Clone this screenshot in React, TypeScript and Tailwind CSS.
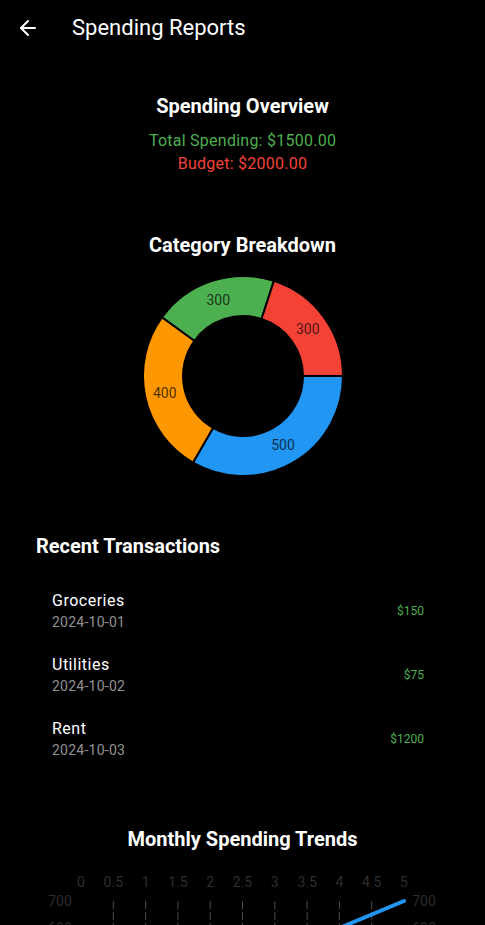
import { ArrowLeft } from "lucide-react";

const categories = [
  { value: 500, color: "#2196f3" },
  { value: 400, color: "#ff9800" },
  { value: 300, color: "#4caf50" },
  { value: 300, color: "#f44336" },
];

const transactions = [
  { title: "Groceries", date: "2024-10-01", amount: "$150" },
  { title: "Utilities", date: "2024-10-02", amount: "$75" },
  { title: "Rent", date: "2024-10-03", amount: "$1200" },
];

// Ring segment between two angles (degrees, clockwise from 3 o'clock)
function arcPath(cx: number, cy: number, r1: number, r2: number, a0: number, a1: number) {
  const rad = (a: number) => (a * Math.PI) / 180;
  const p = (r: number, a: number) => [cx + r * Math.cos(rad(a)), cy + r * Math.sin(rad(a))];
  const large = a1 - a0 > 180 ? 1 : 0;
  const [x0, y0] = p(r2, a0);
  const [x1, y1] = p(r2, a1);
  const [x2, y2] = p(r1, a1);
  const [x3, y3] = p(r1, a0);
  return `M${x0} ${y0} A${r2} ${r2} 0 ${large} 1 ${x1} ${y1} L${x2} ${y2} A${r1} ${r1} 0 ${large} 0 ${x3} ${y3} Z`;
}

function Donut() {
  const total = categories.reduce((s, c) => s + c.value, 0);
  let start = 0;
  return (
    <svg width="204" height="204" viewBox="-2 -2 204 204">
      {categories.map((c, i) => {
        const sweep = (c.value / total) * 360;
        const a0 = start;
        const a1 = start + sweep;
        start = a1;
        const mid = ((a0 + a1) / 2) * (Math.PI / 180);
        return (
          <g key={i}>
            <path d={arcPath(100, 100, 60, 100, a0, a1)} fill={c.color} stroke="#000" strokeWidth="2" />
            <text
              x={100 + 80 * Math.cos(mid)}
              y={100 + 80 * Math.sin(mid)}
              textAnchor="middle"
              dominantBaseline="central"
              fontSize="14"
              fill="#000"
              fillOpacity="0.72"
            >
              {c.value}
            </text>
          </g>
        );
      })}
    </svg>
  );
}

function TrendChart() {
  const xs = [0, 0.5, 1, 1.5, 2, 2.5, 3, 3.5, 4, 4.5, 5];
  const px = (v: number) => 81 + v * 64.6;
  const py = (v: number) => 35 + ((700 - v) / 100) * 27;
  const data = [
    [0, 300],
    [1, 450],
    [2, 400],
    [3, 500],
    [4, 600],
    [5, 700],
  ];
  const ys = [700, 600, 500, 400, 300, 200, 100, 0];
  return (
    <svg width="485" height="240" viewBox="0 0 485 240" className="block">
      {xs.map((v) => (
        <text key={v} x={px(v)} y={16} textAnchor="middle" dominantBaseline="central" fontSize="14" fill="#2e2e2e">
          {v}
        </text>
      ))}
      {ys.map((v) => (
        <g key={v}>
          <text x={60} y={py(v)} textAnchor="middle" dominantBaseline="central" fontSize="14" fill="#2e2e2e">
            {v}
          </text>
          <text x={424} y={py(v)} textAnchor="middle" dominantBaseline="central" fontSize="14" fill="#2e2e2e">
            {v}
          </text>
        </g>
      ))}
      {xs.slice(1, -1).map((v) => (
        <line key={v} x1={px(v)} x2={px(v)} y1={35} y2={py(0)} stroke="#4a4a4a" strokeWidth="1" strokeDasharray="8 3" />
      ))}
      <polyline
        points={data.map(([x, y]) => `${px(x)},${py(y)}`).join(" ")}
        fill="none"
        stroke="#2196f3"
        strokeWidth="4"
        strokeLinecap="round"
        strokeLinejoin="round"
      />
    </svg>
  );
}

export default function App() {
  return (
    <main className="min-h-screen bg-black text-white font-['Roboto',sans-serif]">
      <header className="h-[56px] flex items-center px-4">
        <ArrowLeft size={24} strokeWidth={2} className="text-white" />
        <h1 className="ml-8 text-[22px] leading-none">Spending Reports</h1>
      </header>

      <section className="mt-[38px] flex flex-col items-center">
        <h2 className="text-[20px] leading-[24px] font-bold">Spending Overview</h2>
        <p className="mt-[11px] text-[16px] leading-[23px] tracking-[0.25px] text-[#4caf50]">Total Spending: $1500.00</p>
        <p className="text-[16px] leading-[23px] tracking-[0.25px] text-[#f44336]">Budget: $2000.00</p>
      </section>

      <section className="mt-[58px] flex flex-col items-center">
        <h2 className="text-[20px] leading-[24px] font-bold">Category Breakdown</h2>
        <div className="mt-[17px]">
          <Donut />
        </div>
      </section>

      <section className="mt-[56px] pl-9 pr-[45px]">
        <h2 className="text-[20px] leading-[24px] font-bold">Recent Transactions</h2>
        <ul className="mt-[21px]">
          {transactions.map((t) => (
            <li key={t.title} className="h-16 flex items-center justify-between px-4">
              <div className="flex flex-col">
                <span className="text-[16px] leading-[22px] tracking-[0.5px]">{t.title}</span>
                <span className="text-[14px] leading-[20px] tracking-[0.25px] text-[#909090]">{t.date}</span>
              </div>
              <span className="text-[12px] text-[#4caf50]">{t.amount}</span>
            </li>
          ))}
        </ul>
      </section>

      <section className="mt-[56px] flex flex-col items-center">
        <h2 className="text-[20px] leading-[24px] font-bold">Monthly Spending Trends</h2>
        <div className="mt-[15px]">
          <TrendChart />
        </div>
      </section>
    </main>
  );
}
